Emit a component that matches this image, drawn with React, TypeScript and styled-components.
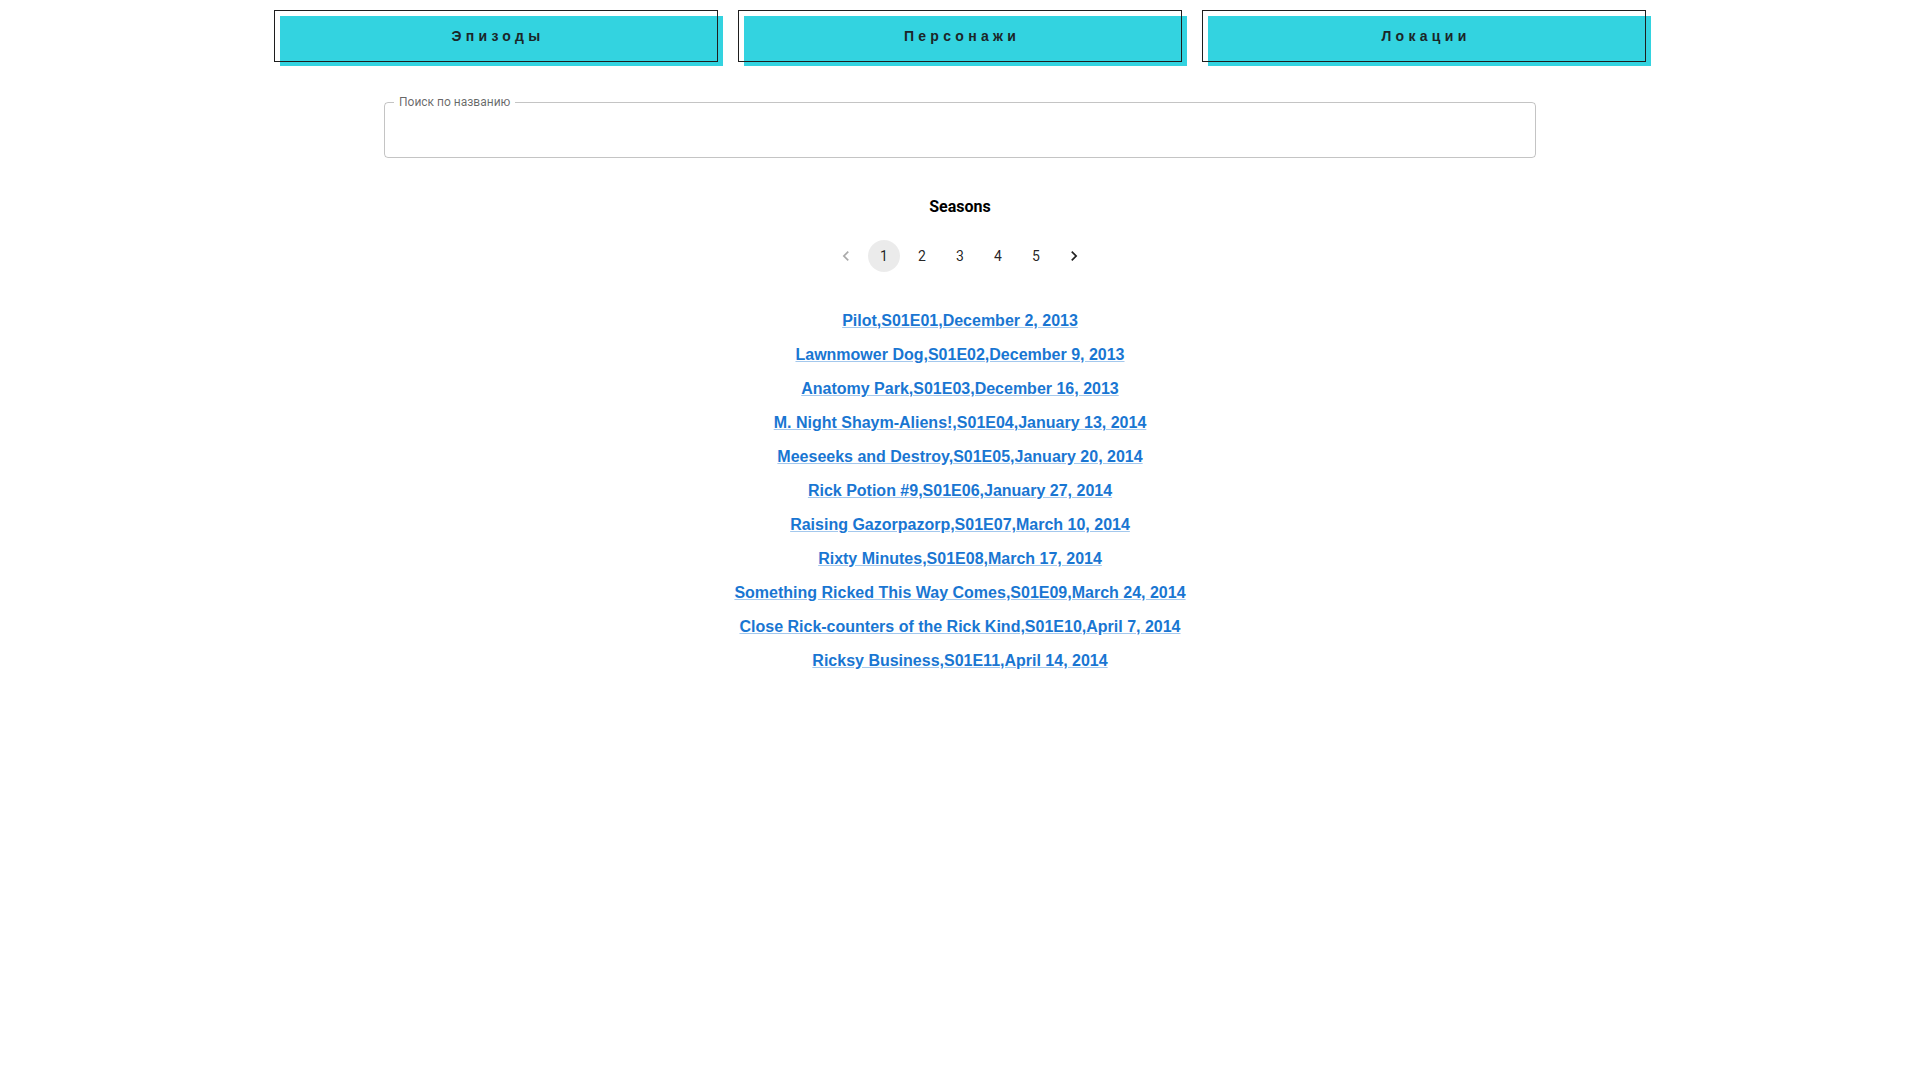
import React from "react";
import styled, { createGlobalStyle } from "styled-components";

const GlobalStyle = createGlobalStyle`
  html, body { margin: 0; padding: 0; background: #fff; }
  body { font-family: Roboto, "Liberation Sans", Arial, sans-serif; }
  * { box-sizing: border-box; }
`;

const Page = styled.div`
  padding-top: 10px;
  display: flex;
  flex-direction: column;
  align-items: center;
`;

const NavRow = styled.nav`
  display: flex;
  justify-content: center;
  gap: 20px;
`;

const NavButton = styled.button`
  position: relative;
  width: 444px;
  height: 52px;
  border: none;
  background: transparent;
  cursor: pointer;
  font-family: "Liberation Sans", Arial, sans-serif;
  font-size: 14px;
  font-weight: 700;
  letter-spacing: 4.3px;
  color: #1b2628;
  padding: 0 0 0 4px;
  isolation: isolate;
  &::before {
    content: "";
    position: absolute;
    top: 6px;
    left: 6px;
    right: -5px;
    bottom: -4px;
    background: #33d3e0;
    z-index: -1;
  }
  &::after {
    content: "";
    position: absolute;
    inset: 0;
    border: 1px solid #1e1e1e;
    pointer-events: none;
  }
`;

const SearchBox = styled.div`
  position: relative;
  margin-top: 40px;
  width: 1152px;
  height: 56px;
  border: 1px solid rgba(0, 0, 0, 0.23);
  border-radius: 4px;
`;

const SearchLabel = styled.label`
  position: absolute;
  top: -8px;
  left: 9px;
  padding: 0 5px;
  background: #fff;
  font-family: Roboto, sans-serif;
  font-size: 12px;
  line-height: 14px;
  color: rgba(0, 0, 0, 0.6);
`;

const SearchInput = styled.input`
  width: 100%;
  height: 100%;
  border: none;
  outline: none;
  background: transparent;
  padding: 16.5px 14px;
  font-family: Roboto, sans-serif;
  font-size: 16px;
`;

const Heading = styled.h2`
  margin: 37px 0 0;
  font-family: Roboto, sans-serif;
  font-size: 16px;
  font-weight: 700;
  line-height: 24px;
  color: #000;
`;

const Pager = styled.ul`
  list-style: none;
  margin: 21px 0 0;
  padding: 0;
  display: flex;
  align-items: center;
`;

const PageItem = styled.li<{ $selected?: boolean; $disabled?: boolean }>`
  min-width: 32px;
  height: 32px;
  margin: 0 3px;
  border-radius: 16px;
  display: flex;
  align-items: center;
  justify-content: center;
  font-family: Roboto, sans-serif;
  font-size: 14px;
  color: rgba(0, 0, 0, 0.87);
  background: ${(p) => (p.$selected ? "rgba(0, 0, 0, 0.08)" : "transparent")};
  opacity: ${(p) => (p.$disabled ? 0.38 : 1)};
  cursor: pointer;
  svg { width: 20px; height: 20px; fill: currentColor; }
`;

const EpisodeList = styled.ul`
  list-style: none;
  margin: 32px 0 0;
  padding: 0;
  display: flex;
  flex-direction: column;
  align-items: center;
`;

const EpisodeItem = styled.li`
  line-height: 34px;
`;

const EpisodeLink = styled.a`
  font-family: "Liberation Sans", Arial, sans-serif;
  font-size: 16px;
  font-weight: 700;
  color: #1976d2;
  text-decoration: underline;
  text-decoration-color: rgba(25, 118, 210, 0.4);
  &:hover { text-decoration-color: inherit; }
`;

const episodes = [
  "Pilot,S01E01,December 2, 2013",
  "Lawnmower Dog,S01E02,December 9, 2013",
  "Anatomy Park,S01E03,December 16, 2013",
  "M. Night Shaym-Aliens!,S01E04,January 13, 2014",
  "Meeseeks and Destroy,S01E05,January 20, 2014",
  "Rick Potion #9,S01E06,January 27, 2014",
  "Raising Gazorpazorp,S01E07,March 10, 2014",
  "Rixty Minutes,S01E08,March 17, 2014",
  "Something Ricked This Way Comes,S01E09,March 24, 2014",
  "Close Rick-counters of the Rick Kind,S01E10,April 7, 2014",
  "Ricksy Business,S01E11,April 14, 2014",
];

const Prev = () => (
  <svg viewBox="0 0 24 24"><path d="M15.41 7.41 14 6l-6 6 6 6 1.41-1.41L10.83 12z" /></svg>
);
const Next = () => (
  <svg viewBox="0 0 24 24"><path d="M10 6 8.59 7.41 13.17 12l-4.58 4.59L10 18l6-6z" /></svg>
);

export default function App() {
  return (
    <>
      <GlobalStyle />
      <Page>
        <NavRow>
          <NavButton>Эпизоды</NavButton>
          <NavButton>Персонажи</NavButton>
          <NavButton>Локации</NavButton>
        </NavRow>
        <SearchBox>
          <SearchLabel htmlFor="search">Поиск по названию</SearchLabel>
          <SearchInput id="search" />
        </SearchBox>
        <Heading>Seasons</Heading>
        <Pager>
          <PageItem $disabled><Prev /></PageItem>
          {[1, 2, 3, 4, 5].map((n) => (
            <PageItem key={n} $selected={n === 1}>{n}</PageItem>
          ))}
          <PageItem><Next /></PageItem>
        </Pager>
        <EpisodeList>
          {episodes.map((e) => (
            <EpisodeItem key={e}>
              <EpisodeLink href="#">{e}</EpisodeLink>
            </EpisodeItem>
          ))}
        </EpisodeList>
      </Page>
    </>
  );
}
